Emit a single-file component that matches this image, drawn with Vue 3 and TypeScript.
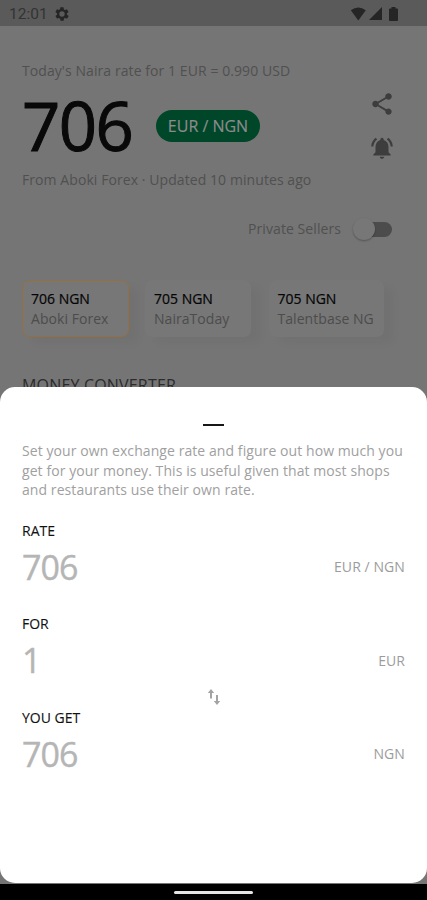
<script setup lang="ts">
interface Quote { rate: number; source: string; active: boolean }
interface Field { label: string; value: string; unit: string }

const quotes: Quote[] = [
  { rate: 706, source: 'Aboki Forex', active: true },
  { rate: 705, source: 'NairaToday', active: false },
  { rate: 705, source: 'Talentbase NG', active: false },
]
const fields: Field[] = [
  { label: 'RATE', value: '706', unit: 'EUR / NGN' },
  { label: 'FOR', value: '1', unit: 'EUR' },
  { label: 'YOU GET', value: '706', unit: 'NGN' },
]
</script>

<template>
  <div class="phone">
    <header class="status">
      <span class="clock">12:01</span>
      <svg class="gear" viewBox="0 0 24 24"><path fill-rule="evenodd" d="M19.4 13a7.500 7.500 0 0 0 0-2l2.100-1.600a.5.5 0 0 0 .1-.7l-2-3.400a.5.5 0 0 0-.6-.2l-2.500 1a7 7 0 0 0-1.700-1l-.4-2.700a.5.5 0 0 0-.5-.4h-4a.5.5 0 0 0-.5.400L9.100 5a7 7 0 0 0-1.700 1l-2.500-1a.5.5 0 0 0-.6.2l-2 3.400a.5.5 0 0 0 .1.700L4.600 11a7.500 7.500 0 0 0 0 2l-2.100 1.600a.5.5 0 0 0-.1.700l2 3.400c.1.200.4.300.6.200l2.500-1c.5.400 1.100.8 1.700 1l.4 2.700c0 .2.200.4.500.4h4c.2 0 .5-.2.500-.4l.4-2.700a7 7 0 0 0 1.700-1l2.500 1c.2.100.5 0 .6-.2l2-3.400a.5.5 0 0 0-.1-.7zM12 16a4 4 0 1 1 0-8 4 4 0 0 1 0 8z" /></svg>
      <div class="signals">
        <svg width="17" height="14" viewBox="0 0 17 14"><path d="M.8 3.200Q8.300-2 15.800 3.200L8.300 13.600z" /></svg>
        <svg width="13" height="13" viewBox="0 0 13 13"><path d="M13 0v13H0z" /></svg>
        <svg class="battery" width="9" height="14" viewBox="0 0 9 14"><path d="M2.500 0h4v1.500H8q1 0 1 1V13q0 1-1 1H1q-1 0-1-1V2.500q0-1 1-1h1.500z" /></svg>
      </div>
    </header>

    <main class="page">
      <p class="muted summary">Today's Naira rate for 1 EUR = 0.990 USD</p>
      <div class="hero">
        <span class="rate">706</span>
        <span class="pair">EUR / NGN</span>
        <div class="actions">
          <svg width="26" height="26" viewBox="0 0 24 24"><path d="M18 16.080c-.76 0-1.440.3-1.960.77L8.910 12.700c.05-.23.09-.46.09-.7s-.04-.47-.09-.7l7.050-4.110c.54.5 1.250.81 2.040.81 1.660 0 3-1.340 3-3s-1.340-3-3-3-3 1.340-3 3c0 .24.040.47.090.7L8.040 9.810C7.500 9.310 6.790 9 6 9c-1.660 0-3 1.340-3 3s1.340 3 3 3c.79 0 1.500-.31 2.040-.81l7.120 4.160c-.05.21-.08.43-.08.65 0 1.610 1.310 2.920 2.920 2.920s2.920-1.310 2.920-2.920-1.310-2.920-2.920-2.920z" /></svg>
          <svg width="26" height="26" viewBox="0 0 24 24"><path d="M7.580 4.080L6.150 2.650C3.750 4.480 2.170 7.300 2.030 10.500h2c.15-2.650 1.510-4.970 3.550-6.420zm12.390 6.420h2c-.15-3.200-1.730-6.020-4.120-7.850l-1.420 1.430c2.020 1.450 3.390 3.770 3.540 6.420zM18 11c0-3.070-1.640-5.640-4.500-6.320V4c0-.83-.67-1.500-1.500-1.500s-1.500.67-1.500 1.500v.68C7.630 5.360 6 7.920 6 11v5l-2 2v1h16v-1l-2-2v-5zm-6 11c.14 0 .27-.01.4-.04.65-.14 1.180-.58 1.440-1.180.1-.24.15-.5.15-.78h-4c.01 1.100.9 2 2.010 2z" /></svg>
        </div>
      </div>
      <p class="muted updated">From Aboki Forex · Updated 10 minutes ago</p>
      <div class="sellers">
        <span class="muted">Private Sellers</span>
        <span class="switch"><i class="knob"></i></span>
      </div>
      <div class="quotes">
        <article v-for="q in quotes" :key="q.source" class="quote" :class="{ active: q.active }">
          <b>{{ q.rate }} NGN</b>
          <span>{{ q.source }}</span>
        </article>
      </div>
      <h2 class="converter">MONEY CONVERTER</h2>
    </main>

    <section class="sheet">
      <div class="handle"></div>
      <p class="intro">Set your own exchange rate and figure out how much you<br>get for your money. This is useful given that most shops<br>and restaurants use their own rate.</p>
      <div v-for="f in fields" :key="f.label" class="field">
        <label>{{ f.label }}</label>
        <div class="entry"><strong>{{ f.value }}</strong><span>{{ f.unit }}</span></div>
      </div>
      <svg class="swap" width="14" height="18" viewBox="0 0 14 18"><path d="M4 1L.8 5h2.200V10.500h2V5h2.200zM10 17l3.200-4h-2.200V7H9v6H6.800z" /></svg>
    </section>
    <footer class="nav"><span></span></footer>
  </div>
</template>

<style>
body { margin: 0; background: #000; }
</style>
<style scoped>
* { box-sizing: border-box; }
p, h2 { margin: 0; }
svg { display: block; }
.phone {
  position: relative;
  display: flex;
  flex-direction: column;
  width: 427px;
  height: 900px;
  overflow: hidden;
  background: #757575;
  font-family: "Open Sans", "Noto Sans", sans-serif;
  font-size: 14px;
}
.status {
  display: flex;
  align-items: center;
  flex: none;
  height: 26px;
  padding: 1px 29px 0 9px;
  background: #5a5a5a;
  color: #333;
  fill: #252525;
}
.clock { font: 400 15.500px/24px Roboto, sans-serif; width: 45px; }
.gear { width: 16px; height: 16px; }
.signals { display: flex; align-items: center; margin-left: auto; gap: 2px; }
.battery { margin-left: 5px; }
.page { height: 858px; padding: 35px 22px 0; }
.muted { color: #505050; line-height: 20px; letter-spacing: .075px; white-space: nowrap; }
.hero { display: flex; align-items: center; height: 89px; }
.rate {
  width: 134px;
  color: #090909;
  font-size: 67px;
  line-height: 89px;
  letter-spacing: -1.500px;
  -webkit-text-stroke: 1px #090909;
}
.pair {
  width: 104px;
  height: 32px;
  border-radius: 16px;
  background: #00472a;
  color: #8c8c8c;
  font-size: 16px;
  line-height: 33px;
  text-align: center;
  white-space: nowrap;
  -webkit-text-stroke: .15px #8c8c8c;
}
.actions { display: flex; flex-direction: column; gap: 18px; margin: 0 10.500px 0 auto; fill: #3d3d3d; }
.sellers { display: flex; align-items: center; justify-content: flex-end; height: 30px; margin: 24px 13px 0 0; }
.switch { position: relative; width: 33px; height: 15px; margin-left: 18px; border-radius: 8px; background: #4c4c4c; }
.knob {
  position: absolute;
  left: -6px;
  top: -4px;
  width: 22px;
  height: 22px;
  border-radius: 50%;
  background: #777;
  box-shadow: 0 1px 2px rgba(0, 0, 0, .28);
}
.quotes { display: flex; gap: 17px; margin-top: 36px; }
.quote {
  display: flex;
  flex-direction: column;
  height: 57px;
  padding: 8px;
  border: 1px solid transparent;
  border-radius: 7px;
  background: #777;
  box-shadow: 10px 7px 9px rgba(0, 0, 0, .03);
  line-height: 20px;
  white-space: nowrap;
}
.quote:nth-child(1) { width: 107px; }
.quote:nth-child(2) { width: 106px; margin-left: -1px; }
.quote:nth-child(3) { width: 115px; margin-left: .5px; }
.quote.active { border-color: #94703f; }
.quote b { color: #050505; font-weight: 400; -webkit-text-stroke: .2px #050505; }
.quote span { color: #4c4c4c; letter-spacing: .05px; }
.converter { margin-top: 37px; color: #2b2b2b; font-size: 16px; font-weight: 400; line-height: 22px; letter-spacing: .18px; }
.sheet {
  position: absolute;
  inset: 387px 0 17px;
  padding: 37px 22px 0;
  border-radius: 15px;
  background: #fff;
}
.handle { width: 21px; height: 2px; margin: 0 auto; background: #171717; }
.intro { margin-top: 15px; color: #a0a0a0; line-height: 19.600px; letter-spacing: .075px; white-space: nowrap; }
.field { height: 93.400px; }
.intro + .field { margin-top: 21.200px; }
.field label { display: block; height: 20px; color: #111; line-height: 20px; -webkit-text-stroke: .1px #111; }
.entry { display: flex; align-items: center; justify-content: space-between; height: 52px; }
.entry strong { color: #b5b5b5; font-size: 34px; font-weight: 400; letter-spacing: -1px; -webkit-text-stroke: .4px #b5b5b5; }
.entry span { color: #9c9c9c; letter-spacing: .075px; }
.swap { position: absolute; left: 207px; top: 301px; fill: #a3a3a3; }
.nav { display: flex; justify-content: center; flex: none; height: 16px; padding-top: 7px; background: #000; }
.nav span { width: 79px; height: 3px; border-radius: 2px; background: #e5e5e5; }
</style>
